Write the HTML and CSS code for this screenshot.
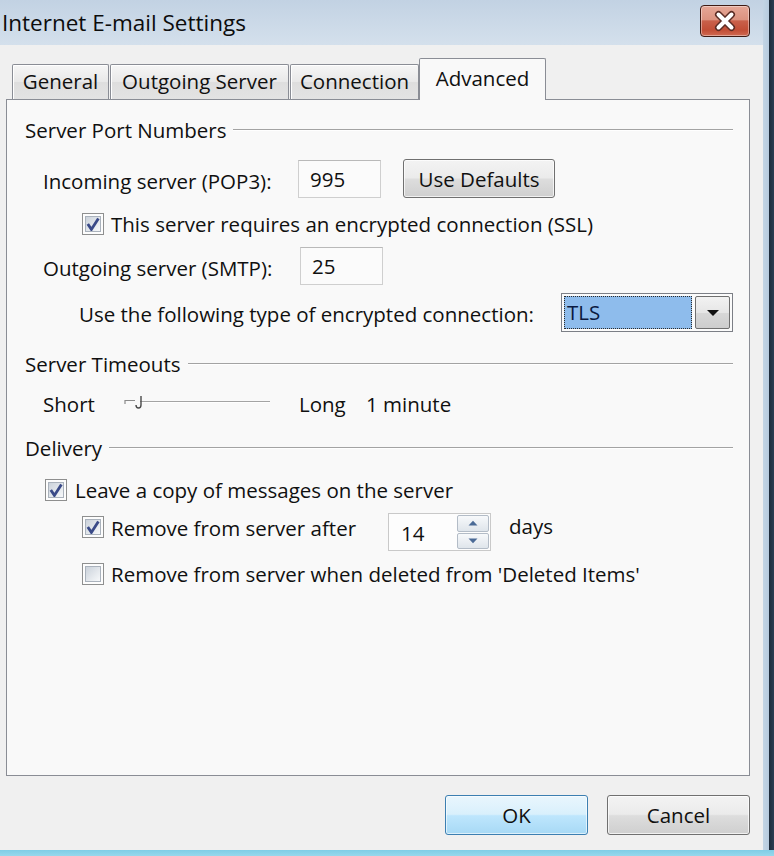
FILE: index.html
```html
<!DOCTYPE html>
<html lang="en">
<head>
<meta charset="utf-8">
<title>Internet E-mail Settings</title>
<link rel="stylesheet" href="styles.css">
</head>
<body>
<div class="screen">
  <div class="main">
    <div class="window">
      <div class="titlebar">
        <span class="title">Internet E-mail Settings</span>
        <div class="close">
          <svg width="50" height="32" viewBox="0 0 50 32">
            <path d="M18.5 9.5 L31.5 22.5 M31.5 9.5 L18.5 22.5" stroke="#5b2c24" stroke-width="7" stroke-linecap="round" fill="none"/>
            <path d="M18.5 9.5 L31.5 22.5 M31.5 9.5 L18.5 22.5" stroke="#ffffff" stroke-width="4" stroke-linecap="round" fill="none"/>
          </svg>
        </div>
      </div>
      <div class="client">
        <div class="tabs">
          <div class="tab tab-general">General</div>
          <div class="tab tab-outgoing">Outgoing Server</div>
          <div class="tab tab-connection">Connection</div>
          <div class="tab tab-advanced active">Advanced</div>
        </div>
        <div class="panel">
          <div class="group group-ports"><span>Server Port Numbers</span><i class="rule"></i></div>

          <div class="row-port row-incoming">
            <span class="lbl lbl-in">Incoming server (POP3):</span>
            <div class="textbox">995</div>
            <div class="btn btn-defaults">Use Defaults</div>
          </div>

          <div class="row-check row-ssl">
            <span class="cb checked"><span class="cb-in"><svg width="14" height="14" viewBox="0 0 14 14"><path d="M1.8 7 L5.4 12.4 L12.4 1.4" fill="none" stroke="#3a4a88" stroke-width="2.8"/></svg></span></span>
            <span class="cb-text">This server requires an encrypted connection (SSL)</span>
          </div>

          <div class="row-port row-outgoing">
            <span class="lbl lbl-out">Outgoing server (SMTP):</span>
            <div class="textbox">25</div>
          </div>

          <div class="row-tls">
            <span class="lbl lbl-tls">Use the following type of encrypted connection:</span>
            <div class="combo">
              <div class="combo-value"><span class="combo-sel">TLS</span></div>
              <div class="combo-btn">
                <svg width="14" height="8" viewBox="0 0 14 8"><path d="M1 1 H13 L7 7 Z" fill="#111"/></svg>
              </div>
            </div>
          </div>

          <div class="group group-timeouts"><span>Server Timeouts</span><i class="rule"></i></div>

          <div class="row-slider">
            <span class="lbl lbl-short">Short</span>
            <svg class="slider" width="150" height="20" viewBox="0 0 150 20">
              <path d="M16 9.5 H146" stroke="#a4a4a4" stroke-width="1"/>
              <path d="M16 10.5 H146" stroke="#ffffff" stroke-width="1"/>
              <path d="M1 12 V8.5 H11" stroke="#8a8a8a" stroke-width="1.2" fill="none"/>
              <path d="M17 4 V13 Q17 16 14.5 16 Q12 16 12 13" stroke="#4a4a4a" stroke-width="1.4" fill="none"/>
            </svg>
            <span class="lbl lbl-long">Long</span>
            <span class="lbl">1 minute</span>
          </div>

          <div class="group group-delivery"><span>Delivery</span><i class="rule"></i></div>

          <div class="row-check row-leave">
            <span class="cb checked"><span class="cb-in"><svg width="14" height="14" viewBox="0 0 14 14"><path d="M1.8 7 L5.4 12.4 L12.4 1.4" fill="none" stroke="#3a4a88" stroke-width="2.8"/></svg></span></span>
            <span class="cb-text cb-text-wide">Leave a copy of messages on the server</span>
          </div>

          <div class="row-after">
            <span class="cb checked"><span class="cb-in"><svg width="14" height="14" viewBox="0 0 14 14"><path d="M1.8 7 L5.4 12.4 L12.4 1.4" fill="none" stroke="#3a4a88" stroke-width="2.8"/></svg></span></span>
            <span class="cb-text lbl-after">Remove from server after</span>
            <div class="spin">
              <span class="spin-val">14</span>
              <div class="spin-btns">
                <div class="spin-btn"><svg width="10" height="6" viewBox="0 0 10 6"><path d="M0.5 5.5 L5 0.8 L9.5 5.5 Z" fill="#4a6a96"/></svg></div>
                <div class="spin-btn"><svg width="10" height="6" viewBox="0 0 10 6"><path d="M0.5 0.5 L5 5.2 L9.5 0.5 Z" fill="#4a6a96"/></svg></div>
              </div>
            </div>
            <span class="lbl lbl-days">days</span>
          </div>

          <div class="row-check row-deleted">
            <span class="cb"><span class="cb-in"></span></span>
            <span class="cb-text">Remove from server when deleted from 'Deleted Items'</span>
          </div>
        </div>
        <div class="buttons">
          <div class="btn btn-ok">OK</div>
          <div class="btn btn-cancel">Cancel</div>
        </div>
      </div>
    </div>
    <div class="edge-right"></div>
  </div>
  <div class="edge-bottom"></div>
</div>
</body>
</html>
```

FILE: styles.css
```css
* { box-sizing: border-box; }
html, body { margin: 0; padding: 0; }
body {
  width: 774px;
  height: 856px;
  overflow: hidden;
  font-family: "Open Sans", "Noto Sans", sans-serif;
  font-size: 20.5px;
  color: #101010;
  background: #f0f0f0;
}
.screen { display: flex; flex-direction: column; width: 774px; height: 856px; }
.main { display: flex; height: 850px; }
.window { width: 763px; display: flex; flex-direction: column; background: #f0f0f0; }
.edge-right { width: 11px; background: linear-gradient(to right, #c3d5e5 0, #b7cbde 6px, #1e2c3b 6px, #2a3d52 100%); }
.edge-bottom { height: 6px; background: linear-gradient(#7fcde6, #96d8ec); }

/* title bar */
.titlebar {
  height: 45px;
  display: flex;
  justify-content: space-between;
  align-items: center;
  padding-left: 2px;
  background: linear-gradient(#c2d2e3, #d4e0ec);
}
.title { font-size: 22.5px; line-height: 30px; color: #0c0c0c; }
.close {
  align-self: flex-start;
  margin-top: 5px;
  margin-right: 13px;
  width: 50px;
  height: 32px;
  border: 1px solid #3f1b14;
  border-radius: 4px;
  background: linear-gradient(#e6a797 0%, #dc9380 45%, #c9604a 50%, #c24e36 80%, #cf6a52 100%);
  box-shadow: inset 0 0 0 1px rgba(255,255,255,0.4);
  display: flex;
  align-items: center;
  justify-content: center;
}
.close svg { display: block; margin: -1px; }

/* client */
.client { padding: 13px 0 0 6px; }
.tabs { height: 41px; display: flex; align-items: flex-end; padding-left: 6px; }
.tab {
  height: 35px;
  border: 1px solid #8a8d95;
  border-bottom: none;
  border-radius: 2px 2px 0 0;
  background: linear-gradient(#f6f6f6, #e8e8e8 50%, #dedede 51%, #e3e3e3);
  box-shadow: inset 1px 1px 0 #fff;
  text-align: center;
  line-height: 33px;
  white-space: nowrap;
}
.tab-general { width: 97px; }
.tab-outgoing { width: 179px; margin-left: 1px; }
.tab-connection { width: 129px; margin-left: 1px; }
.tab-advanced { width: 127px; }
.tab.active {
  height: 42px;
  margin-bottom: -1px;
  line-height: 38px;
  background: #f9f9f9;
  box-shadow: none;
  position: relative;
  z-index: 1;
}

.panel {
  width: 744px;
  height: 677px;
  border: 1px solid #8a8d95;
  background: #f9f9f9;
  padding: 0 16px 0 18px;
  display: flex;
  flex-direction: column;
}

.group { display: flex; align-items: center; height: 24px; line-height: 24px; white-space: nowrap; }
.group .rule { flex: 1; height: 1px; background: #a3a3a3; box-shadow: 0 1px 0 #ffffff; margin-left: 7px; margin-top: -1px; }
.group-ports { margin-top: 18px; }
.group-timeouts { margin-top: 20px; }
.group-delivery { margin-top: 20px; }

.lbl { white-space: nowrap; line-height: 24px; }

.row-port { display: flex; align-items: center; height: 39px; margin-left: 18px; }
.row-incoming { margin-top: 17px; }
.row-outgoing { margin-top: 11px; }
.lbl-in { width: 255px; padding-top: 4px; }
.lbl-out { width: 257px; padding-top: 4px; }
.textbox {
  width: 83px;
  height: 38px;
  border: 1px solid #cfcfcf;
  border-top-color: #b9b9b9;
  background: #fbfbfb;
  padding-left: 11px;
  line-height: 36px;
}

.btn {
  display: flex;
  align-items: center;
  justify-content: center;
  border: 1px solid #707070;
  border-radius: 3px;
  background: linear-gradient(#f3f3f3, #ebebeb 48%, #dddddd 52%, #cfcfcf);
  box-shadow: inset 0 0 0 1px rgba(255,255,255,0.7);
  white-space: nowrap;
}
.btn-defaults { margin-left: 22px; width: 152px; height: 39px; }

.row-check { display: flex; align-items: center; height: 22px; }
.row-ssl { margin-top: 15px; margin-left: 57px; }
.row-leave { margin-top: 19px; margin-left: 20px; }
.row-deleted { margin-top: 12px; margin-left: 57px; }
.cb {
  width: 22px;
  height: 22px;
  flex: none;
  border: 1px solid #8e8f8f;
  background: #fdfdfd;
  padding: 2px;
}
.cb-in {
  display: flex;
  align-items: center;
  justify-content: center;
  width: 16px;
  height: 16px;
  border: 1px solid #aab2bc;
  background: linear-gradient(135deg, #cbd2db, #eef1f4 80%, #f7f8fa);
}
.cb-in svg { display: block; }
.cb-text { margin-left: 7px; line-height: 24px; white-space: nowrap; }
.cb-text-wide { margin-left: 8px; }

.row-tls { display: flex; align-items: center; height: 39px; margin-top: 8px; margin-left: 54px; }
.lbl-tls { width: 482px; padding-top: 3px; }
.combo {
  width: 172px;
  height: 39px;
  border: 1px solid #7c7f86;
  background: #fbfbfb;
  display: flex;
  padding: 2px;
  gap: 3px;
}
.combo-value { flex: 1; }
.combo-sel {
  display: block;
  height: 100%;
  background: #8ebcec;
  outline: 1px dotted #2b2b2b;
  outline-offset: -1px;
  color: #0b1a40;
  line-height: 33px;
  padding-left: 3px;
}
.combo-btn {
  width: 35px;
  border: 1px solid #6f6f6f;
  border-radius: 2px;
  background: linear-gradient(#f2f2f2, #e6e6e6 50%, #d8d8d8 51%, #cdcdcd);
  display: flex;
  align-items: center;
  justify-content: center;
}

.row-slider { display: flex; align-items: center; height: 24px; margin-top: 16px; margin-left: 18px; }
.lbl-short { width: 81px; }
.slider { display: block; margin-top: -4px; }
.lbl-long { margin-left: 25px; width: 67px; }

.row-after { display: flex; align-items: flex-start; height: 38px; margin-top: 12px; margin-left: 57px; }
.row-after .cb { margin-top: 3px; }
.lbl-after { width: 277px; margin-top: 3px; }
.spin {
  width: 103px;
  height: 38px;
  border: 1px solid #c9c9c9;
  background: #fdfdfd;
  display: flex;
}
.spin-val { flex: 1; padding-left: 12px; line-height: 38px; }
.spin-btns { width: 33px; display: flex; flex-direction: column; padding: 1px 1px 1px 0; gap: 1px; }
.spin-btn {
  flex: 1;
  border: 1px solid #b3bcc7;
  border-radius: 2px;
  background: linear-gradient(#f7f9fb, #dfe5eb);
  display: flex;
  align-items: center;
  justify-content: center;
}
.spin-btn svg { display: block; }
.lbl-days { margin-left: 18px; margin-top: 1px; }

.buttons { width: 744px; display: flex; justify-content: flex-end; gap: 19px; margin-top: 19px; }
.btn-ok, .btn-cancel { width: 143px; height: 40px; }
.btn-ok {
  border-color: #3c7fb1;
  background: linear-gradient(#e9f6fd, #d9f0fc 48%, #bee6fd 52%, #a7d9f5);
  box-shadow: inset 0 0 0 1px rgba(255,255,255,0.6);
}
```
